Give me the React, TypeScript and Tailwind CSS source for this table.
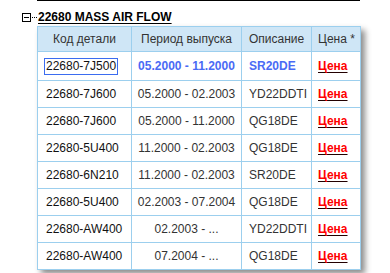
import React from 'react';

type Row = {
  code: string;
  period: string;
  desc: string;
  active?: boolean;
};

const rows: Row[] = [
  { code: '22680-7J500', period: '05.2000 - 11.2000', desc: 'SR20DE', active: true },
  { code: '22680-7J600', period: '05.2000 - 02.2003', desc: 'YD22DDTI' },
  { code: '22680-7J600', period: '05.2000 - 11.2000', desc: 'QG18DE' },
  { code: '22680-5U400', period: '11.2000 - 02.2003', desc: 'QG18DE' },
  { code: '22680-6N210', period: '11.2000 - 02.2003', desc: 'SR20DE' },
  { code: '22680-5U400', period: '02.2003 - 07.2004', desc: 'QG18DE' },
  { code: '22680-AW400', period: '02.2003 - ...', desc: 'YD22DDTI' },
  { code: '22680-AW400', period: '07.2004 - ...', desc: 'QG18DE' },
];

export default function App() {
  return (
    <div className="w-[390px] h-[273px] overflow-hidden bg-white font-['Liberation_Sans',Arial,sans-serif] text-[12px] text-[#333]">
      {/* underline of the previous group, cut off by the window */}
      <div className="ml-[37px] w-[323px] h-px bg-black" />

      <div className="flex items-center h-[14px] mt-[9px] pl-[22px]">
        <span className="w-[9px] h-[9px] border border-black flex items-center justify-center">
          <span className="w-[5px] h-px bg-black" />
        </span>
        <span className="w-[5px] border-t border-dotted border-black ml-px mr-px" />
        <a className="font-bold text-black underline underline-offset-[2px] leading-none">22680 MASS AIR FLOW</a>
      </div>

      <table className="ml-[37px] mt-[2px] border-collapse shadow-[4px_4px_6px_rgba(0,0,0,0.45)]">
        <thead>
          <tr className="h-[25px] bg-[#cfe6f6]">
            <th className="w-[94px] border border-[#9ccfee] font-normal text-center px-1">Код детали</th>
            <th className="w-[110px] border border-[#9ccfee] font-normal text-center px-1">Период выпуска</th>
            <th className="w-[70px] border border-[#9ccfee] font-normal text-left pl-[7px]">Описание</th>
            <th className="w-[49px] border border-[#9ccfee] font-normal text-left pl-[6px]">Цена *</th>
          </tr>
        </thead>
        <tbody>
          {rows.map((r, i) => (
            <tr key={i} className={r.active ? 'h-[29px]' : 'h-[27px]'}>
              <td className="border border-[#9ccfee] pl-[6px] text-[#111]">
                {r.active ? (
                  <span className="inline-block border border-[#3b6cf0] px-px leading-[15px]">{r.code}</span>
                ) : (
                  <span className="pl-[2px]">{r.code}</span>
                )}
              </td>
              <td
                className={
                  'border border-[#9ccfee] text-center ' +
                  (r.active ? 'font-bold text-[#4a6af5]' : '')
                }
              >
                {r.period}
              </td>
              <td
                className={
                  'border border-[#9ccfee] pl-[7px] ' +
                  (r.active ? 'font-bold text-[#4a6af5]' : '')
                }
              >
                {r.desc}
              </td>
              <td className="border border-[#9ccfee] pl-[6px]">
                <a className="font-bold text-[#ff0000] underline decoration-[#220000] underline-offset-[2px]">Цена</a>
              </td>
            </tr>
          ))}
        </tbody>
      </table>
    </div>
  );
}
